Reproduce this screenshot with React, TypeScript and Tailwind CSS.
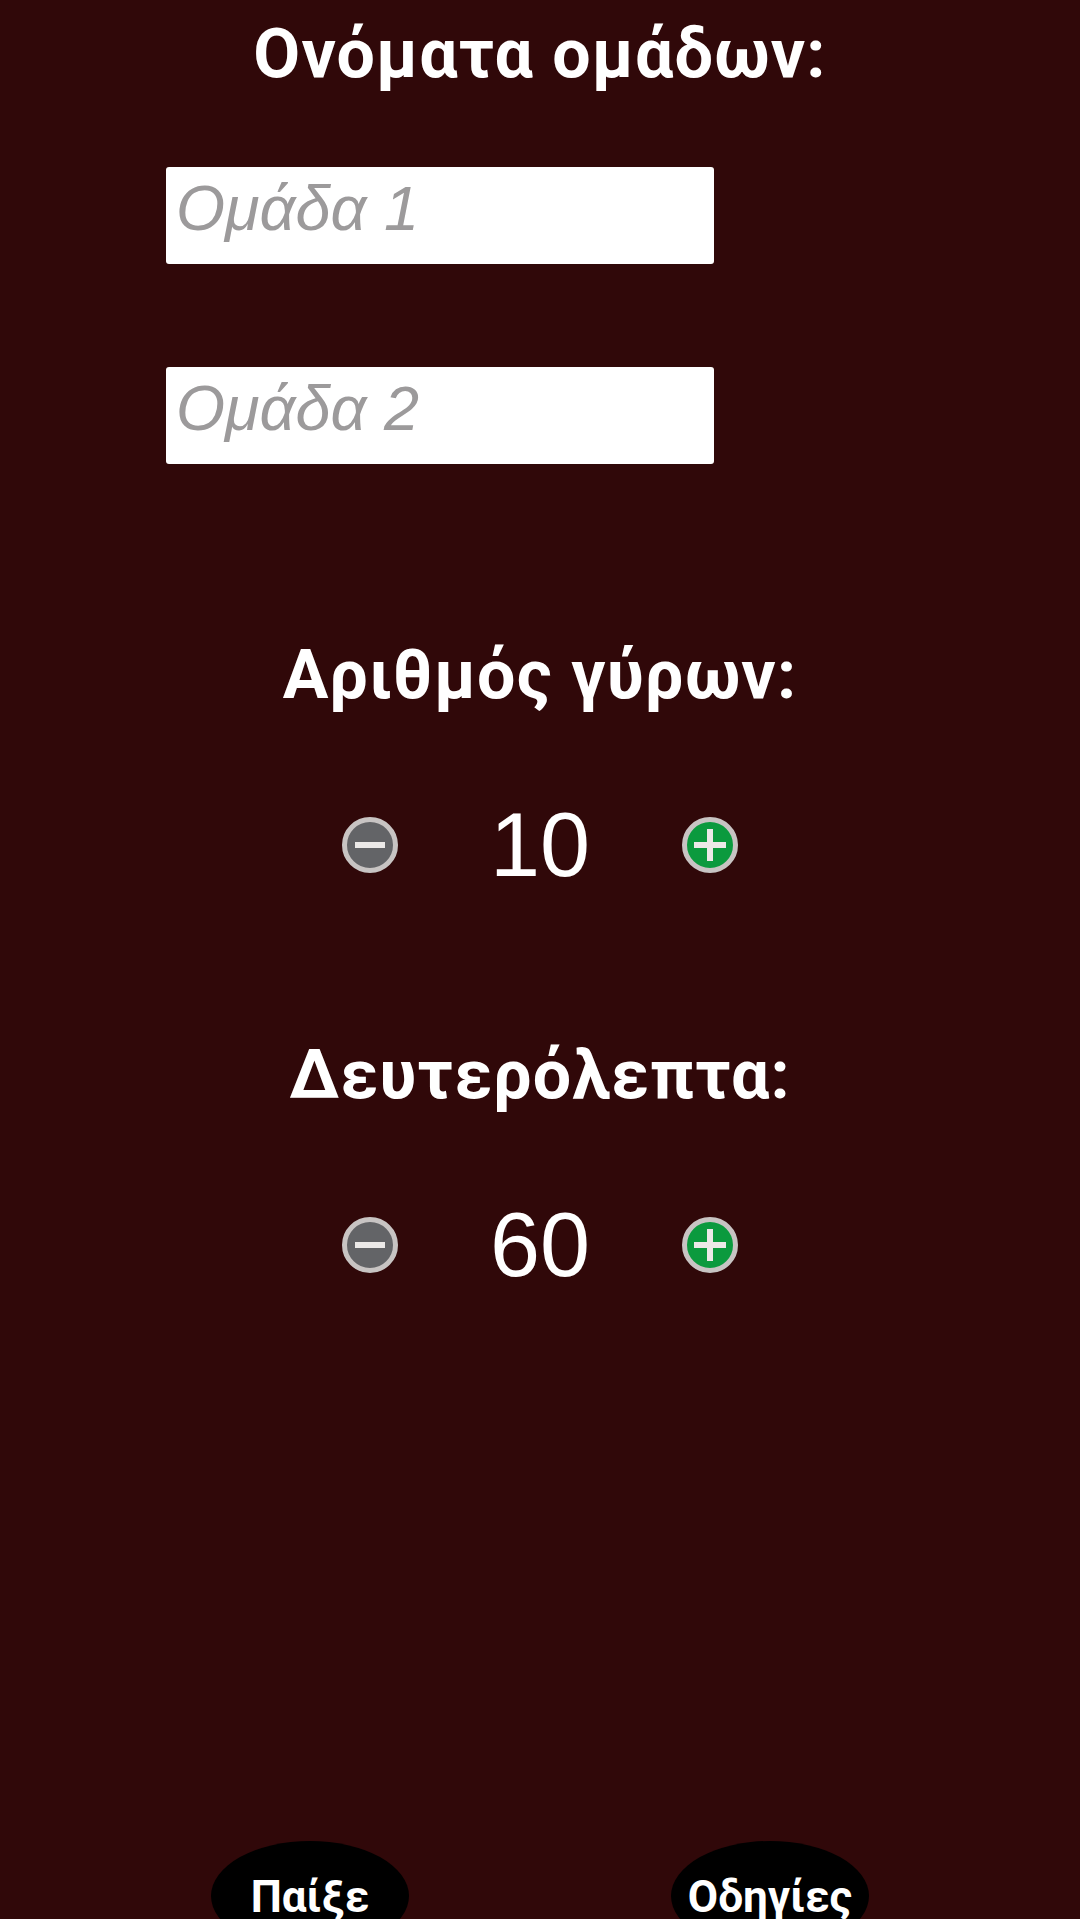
const font = "font-['Liberation_Sans',Arial,sans-serif]"

function Heading({ text, className }: { text: string; className: string }) {
  return (
    <h2 className={`font-['Roboto',sans-serif] text-center text-[68px] leading-[74px] font-bold tracking-[1.2px] text-white ${className}`}>
      {text}:
    </h2>
  )
}

function StepIcon({ kind }: { kind: "minus" | "plus" }) {
  const fill = kind === "minus" ? "#636467" : "#0b9a3e"
  return (
    <svg width="58" height="58" viewBox="0 0 58 58">
      <circle cx="29" cy="29" r="25.5" fill={fill} stroke="#c8c4c3" strokeWidth="5" />
      <path d={kind === "minus" ? "M14 29h30" : "M13 29h32M29 13v32"} stroke="#ece9e8" strokeWidth="6" />
    </svg>
  )
}

function Stepper({ value, className }: { value: number; className: string }) {
  return (
    <div className={`flex items-center justify-center ${className}`}>
      <StepIcon kind="minus" />
      <div className="w-[282px] text-center text-[90px] leading-[96px] text-white">{value}</div>
      <StepIcon kind="plus" />
    </div>
  )
}

function NameInput({ placeholder, className }: { placeholder: string; className: string }) {
  return (
    <input
      placeholder={placeholder}
      className={`block w-[548px] h-[97px] ml-[166px] pl-[10px] pb-[15px] rounded-[3px] bg-white text-[63px] italic outline-none placeholder:text-[#9c9a9b] placeholder:opacity-100 ${className}`}
    />
  )
}

function RoundButton({ label }: { label: string }) {
  return (
    <button className="font-['Roboto',sans-serif] w-[198px] h-[110px] rounded-[50%] bg-black text-white text-[44px] font-bold leading-[48px] pt-[2px]">
      {label}
    </button>
  )
}

export default function App() {
  return (
    <div className={`h-[1919px] overflow-hidden bg-[#300809] ${font}`}>
      <Heading text="Ονόματα ομάδων" className="pt-[17px]" />

      <NameInput placeholder="Ομάδα 1" className="mt-[76px]" />
      <NameInput placeholder="Ομάδα 2" className="mt-[103px]" />

      <Heading text="Αριθμός γύρων" className="mt-[174px]" />
      <Stepper value={10} className="mt-[85px]" />

      <Heading text="Δευτερόλεπτα" className="mt-[145px]" />
      <Stepper value={60} className="mt-[85px]" />

      <div className="flex gap-[262px] pl-[211px] mt-[548px]">
        <RoundButton label="Παίξε" />
        <RoundButton label="Οδηγίες" />
      </div>
    </div>
  )
}
